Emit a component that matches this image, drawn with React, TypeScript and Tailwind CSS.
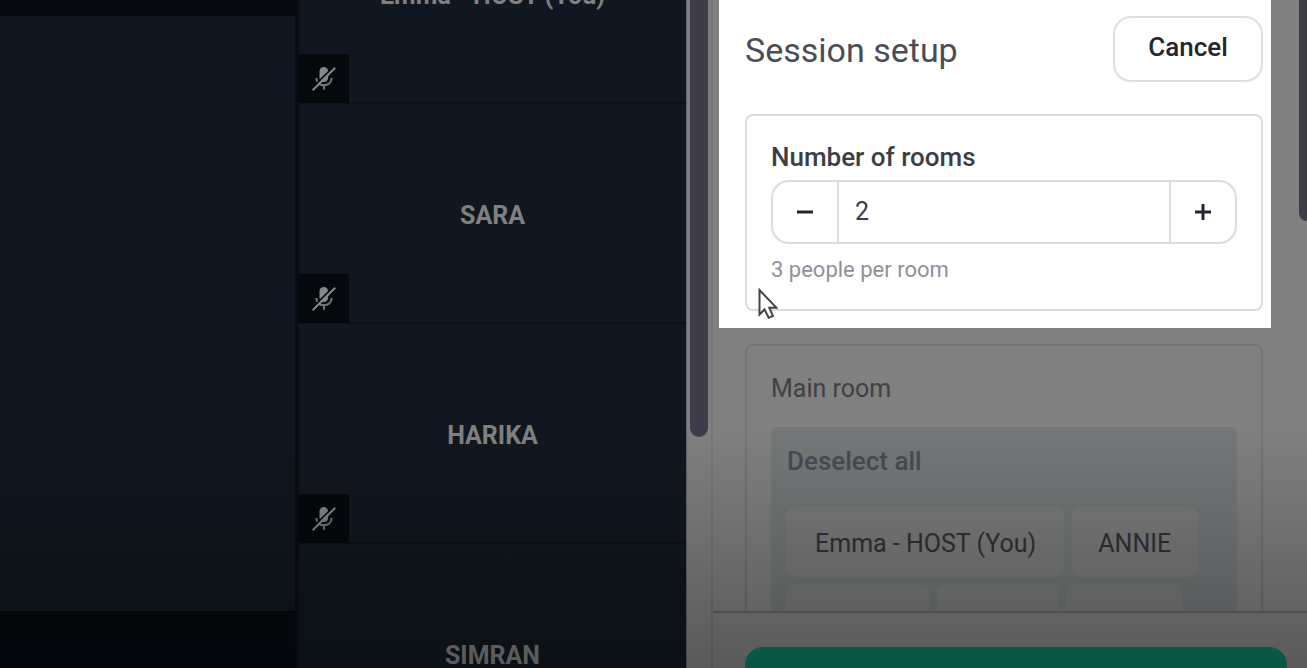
import { useState } from "react";

const people = ["Emma - HOST (You)", "SARA", "HARIKA", "SIMRAN"];

function MicOff() {
  return (
    <svg viewBox="0 0 24 24" className="size-6" fill="none" aria-hidden="true">
      <rect x="7.5" y="0" width="8.6" height="15" rx="4.3" fill="#858789" />
      <path d="M4.4 11c0 4.6 3.2 7.2 7.4 7.2s7.8-2.6 7.8-7.2M12 18.2v4.6" stroke="#707274" strokeWidth="2.2" />
      <path d="M-.4 21.6 21.6-.4" stroke="#05080c" strokeWidth="1.6" />
      <path d="M.6 23.2 23.2.8" stroke="#858789" strokeWidth="2" />
    </svg>
  );
}

function Pointer() {
  return (
    <svg viewBox="0 0 20 32" className="pointer-events-none absolute left-[11px] top-[172px] h-8 w-5" aria-hidden="true">
      <path d="M1.5 2v24.5l5-5 4.2 8.3 4.3-1.8-3.7-8.2h7.2Z" fill="#fff" stroke="#444" strokeWidth="2" />
    </svg>
  );
}

export default function App() {
  const [rooms, setRooms] = useState(2);
  return (
    <div className="relative flex h-screen overflow-hidden bg-[#808080] font-['Roboto',sans-serif]">
      <main className="flex min-w-0 flex-[295] flex-col bg-[#06090f] pb-[57px] pt-4">
        <div className="flex-1 bg-[#111720]" />
      </main>

      <section className="flex min-w-0 flex-[387] flex-col overflow-hidden border-l-4 border-[#090c14] bg-[#111720]" aria-label="Participants">
        {people.map((name, i) => (
          <article
            key={name}
            className={
              "relative flex h-[220px] shrink-0 items-center justify-center border-b-2 border-[#0d111a] pt-[6px] text-[25px] font-bold text-[#808080]" +
              (i === 0 ? " -mt-[116px]" : "")
            }
          >
            <h2>{name}</h2>
            <span className="absolute -bottom-px left-0 grid h-[49px] w-[50px] place-items-center bg-[#05080c]">
              <MicOff />
            </span>
          </article>
        ))}
      </section>

      <div className="w-[25px] shrink-0 border-l border-[#606368] px-[3px]">
        <div className="h-[437px] w-[18px] rounded-b-full bg-[#3d3d4a]" />
      </div>

      <aside className="flex min-w-0 flex-[594] flex-col border-l-2 border-[#747577]">
        <div className="flex min-h-0 flex-1">
          <div className="flex min-w-0 flex-1 flex-col overflow-hidden pl-[6px] pr-7">
            <section className="shrink-0 bg-white pb-[17px] pl-[26px] pr-2 pt-4">
              <header className="flex items-start justify-between">
                <h1 className="pt-3 text-[34px] leading-[44px] text-[#4b4c54]">Session setup</h1>
                <button className="h-[66px] w-[150px] rounded-[18px] border-2 border-[#dedee6] pb-1 text-[26px] font-medium text-[#24262e]">Cancel</button>
              </header>
              <div className="relative mt-8 rounded-lg border-2 border-[#dadae3] px-6 pb-[25px] pt-6">
                <label htmlFor="rooms" className="block text-[26px] leading-[34px] font-medium text-[#3c3d46]">Number of rooms</label>
                <div className="mt-[6px] flex h-16 overflow-hidden rounded-[18px] border-2 border-[#d8dce3]">
                  <button aria-label="Fewer rooms" className="grid w-[66px] shrink-0 place-items-center border-r-2 border-[#dadae3]" onClick={() => setRooms(Math.max(1, rooms - 1))}>
                    <svg viewBox="0 0 16 16" className="size-4"><path d="M0 8h16" stroke="#25252f" strokeWidth="3" /></svg>
                  </button>
                  <input id="rooms" inputMode="numeric" value={rooms} onChange={(e) => setRooms(Number(e.target.value) || 0)} className="min-w-0 flex-1 px-4 text-[25px] text-[#3c3d46] outline-none" />
                  <button aria-label="More rooms" className="grid w-[66px] shrink-0 place-items-center border-l-2 border-[#dadae3]" onClick={() => setRooms(rooms + 1)}>
                    <svg viewBox="0 0 16 16" className="size-4"><path d="M0 8h16M8 0v16" stroke="#25252f" strokeWidth="3" /></svg>
                  </button>
                </div>
                <p className="mt-3 text-[22px] leading-7 text-[#8f9099]">3 people per room</p>
                <Pointer />
              </div>
            </section>

            <section className="ml-[26px] mr-2 mt-4 shrink-0 rounded-lg border-2 border-[#747476] px-6 pt-6">
              <h2 className="text-[25px] leading-[38px] text-[#3f4044]">Main room</h2>
              <div className="mt-[19px] rounded-md bg-[#747879] px-4 pt-4">
                <button className="block text-[26px] leading-9 font-medium text-[#484b53]">Deselect all</button>
                <div className="mt-7 flex flex-wrap gap-2 text-[25px] text-[#303135]">
                  <button className="h-[70px] rounded-lg bg-[#7c7c7c] px-7 pt-1">Emma - HOST (You)</button>
                  <button className="h-[70px] rounded-lg bg-[#7c7c7c] px-[26px] pt-1">ANNIE</button>
                  <div className="h-[70px] w-[142px] rounded-lg bg-[#7c7c7c]" />
                  <div className="h-[70px] w-[122px] rounded-lg bg-[#7c7c7c]" />
                  <div className="h-[70px] w-[114px] rounded-lg bg-[#7c7c7c]" />
                </div>
              </div>
            </section>
          </div>
          <div className="h-[221px] w-2 shrink-0 rounded-bl-lg bg-[#3d3d4a]" />
        </div>
        <footer className="h-[57px] shrink-0 overflow-hidden border-t-2 border-[#646668] pl-8 pr-5 pt-[34px]">
          <button className="h-[66px] w-full rounded-[18px] bg-[#0b7b5f] pb-1 text-[26px] font-medium text-[#111]">Start breakout session</button>
        </footer>
      </aside>
      <div className="pointer-events-none absolute inset-x-0 bottom-0 h-[240px] bg-linear-to-b from-transparent to-black/30" />
    </div>
  );
}
